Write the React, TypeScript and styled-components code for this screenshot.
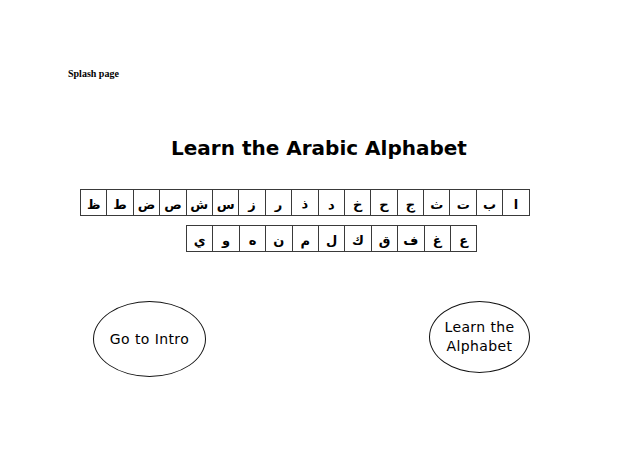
import { createGlobalStyle, styled } from "styled-components";

const GlobalStyle = createGlobalStyle`
  html, body {
    margin: 0;
    padding: 0;
    background: #ffffff;
  }
`;

const Page = styled.div`
  width: 638px;
  height: 452px;
  box-sizing: border-box;
  padding-top: 68px;
  background: #ffffff;
  color: #000000;
  font-family: "DejaVu Sans", sans-serif;
`;

const Caption = styled.div`
  margin-left: 68px;
  font-family: "Liberation Serif", serif;
  font-weight: 700;
  font-size: 10px;
  line-height: 12px;
`;

const Title = styled.h1`
  margin: 55px 0 0;
  text-align: center;
  font-family: "DejaVu Sans", sans-serif;
  font-weight: 700;
  font-size: 20px;
  line-height: 26px;
`;

const LetterRow = styled.div<{ $left: number; $top: number }>`
  display: flex;
  direction: rtl;
  width: fit-content;
  margin-left: ${(p) => p.$left}px;
  margin-top: ${(p) => p.$top}px;
  border: 1px solid #3a3a3a;
  border-left: none;
`;

const Cell = styled.div`
  flex: 0 0 26.4px;
  height: 25px;
  border-left: 1px solid #3a3a3a;
  display: flex;
  align-items: center;
  justify-content: center;
  padding-top: 3px;
  box-sizing: border-box;
  font-family: "DejaVu Sans", sans-serif;
  font-weight: 700;
  font-size: 13px;
`;

const ButtonRow = styled.div`
  display: flex;
  align-items: flex-start;
  margin-top: 49px;
  padding-left: 93px;
`;

const Oval = styled.div<{ $w: number; $h: number; $gap?: number }>`
  flex: 0 0 ${(p) => p.$w}px;
  height: ${(p) => p.$h}px;
  margin-left: ${(p) => p.$gap ?? 0}px;
  box-sizing: border-box;
  border: 1px solid #111111;
  border-radius: 50%;
  display: flex;
  align-items: center;
  justify-content: center;
  text-align: center;
  font-family: "DejaVu Sans", sans-serif;
  font-size: 14px;
  line-height: 19px;
  letter-spacing: 0.4px;
`;

const row1 = ["ا", "ب", "ت", "ث", "ج", "ح", "خ", "د", "ذ", "ر", "ز", "س", "ش", "ص", "ض", "ط", "ظ"];
const row2 = ["ع", "غ", "ف", "ق", "ك", "ل", "م", "ن", "ه", "و", "ي"];

export default function App() {
  return (
    <>
      <GlobalStyle />
      <Page>
        <Caption>Splash page</Caption>
        <Title>Learn the Arabic Alphabet</Title>
        <LetterRow $left={80} $top={28}>
          {row1.map((l) => (
            <Cell key={l}>{l}</Cell>
          ))}
        </LetterRow>
        <LetterRow $left={186} $top={9}>
          {row2.map((l) => (
            <Cell key={l}>{l}</Cell>
          ))}
        </LetterRow>
        <ButtonRow>
          <Oval $w={113} $h={76}>Go to Intro</Oval>
          <Oval $w={101} $h={72} $gap={223}>
            Learn the
            <br />
            Alphabet
          </Oval>
        </ButtonRow>
      </Page>
    </>
  );
}
